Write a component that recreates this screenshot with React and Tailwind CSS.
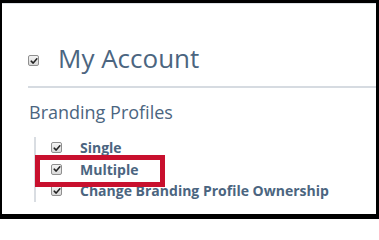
import React from "react";

// small grey checkbox with a dark tick, like the old browser default
const Tick = ({ className = "" }) => (
  <span
    className={`inline-flex items-center justify-center w-[11px] h-[11px] rounded-[2px] border border-[#8f8f8f] bg-gradient-to-b from-[#f4f4f4] to-[#d9d9d9] ${className}`}
  >
    <svg viewBox="0 0 10 10" className="w-[8px] h-[8px]">
      <path d="M1.5 5.2 L4 7.6 L8.6 2.2" fill="none" stroke="#222" strokeWidth="1.9" strokeLinecap="round" strokeLinejoin="round" />
    </svg>
  </span>
);

const items = ["Single", "Multiple", "Change Branding Profile Ownership"];

export default function App() {
  return (
    <div
      className="relative w-[379px] h-[219px] bg-black pt-[3px] pl-[2px] pr-[3px] pb-[5px] overflow-hidden"
      style={{ fontFamily: '"Open Sans", "Liberation Sans", sans-serif' }}
    >
      <div className="h-full bg-white border-t border-[#dde1e6]">
        <div className="ml-[26px] pt-[36px] pb-[10px] border-b-2 border-[#d6dbe1] flex items-center">
          <Tick className="mt-[5px]" />
          <h1 className="ml-[19px] text-[26px] leading-[36px] text-[#4b6580]">My Account</h1>
        </div>

        <h2 className="ml-[27px] mt-[12px] text-[18px] leading-[24px] text-[#4b6580]">Branding Profiles</h2>

        <ul className="ml-[32px] mt-[13px] border-l-2 border-[#d9dde2] pl-[15px]">
          {items.map((it) => (
            <li key={it} className="flex items-start h-[21.5px] leading-[21.5px]">
              <Tick className="mt-[5px] shrink-0" />
              <span className="ml-[18px] text-[14px] font-bold text-[#4b6580] whitespace-nowrap">{it}</span>
            </li>
          ))}
        </ul>
      </div>

      {/* red highlight box */}
      <div className="absolute left-[35px] top-[155px] w-[130px] h-[32px] border-[5px] border-[#c8102e]" />
    </div>
  );
}
